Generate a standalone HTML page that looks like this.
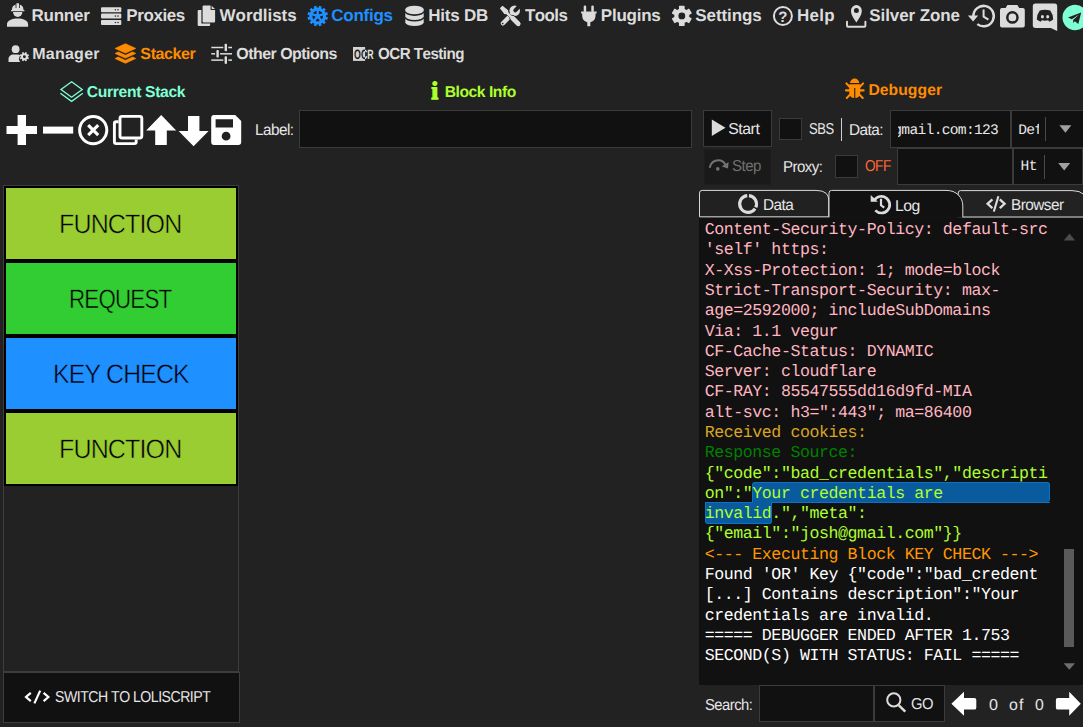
<!DOCTYPE html>
<html lang="en">
<head>
<meta charset="utf-8">
<title>OpenBullet - Stacker</title>
<style>
html,body{margin:0;padding:0;background:#222;}
body{width:1083px;height:727px;position:relative;overflow:hidden;font-family:"Liberation Sans", Arial, sans-serif;color:#dcdcdc;text-rendering:geometricPrecision;}
.abs{position:absolute;box-sizing:border-box;}
.tx{position:absolute;white-space:pre;margin:0;padding:0;font-kerning:none;display:block;}
.box{position:absolute;box-sizing:border-box;background:#111;border:1px solid #3b3b3b;}
.mono{font-family:"Liberation Mono", "DejaVu Sans Mono", monospace;}
.blk{position:absolute;left:6px;width:230px;height:70.5px;}
#stack{position:absolute;left:3px;top:185px;width:236px;height:487px;box-sizing:border-box;border:1px solid #3d3d3d;}
#stackbg{position:absolute;left:4px;top:186px;width:234px;height:300px;background:#000;}
#log{position:absolute;left:699px;top:217.5px;width:384px;height:467px;background:#111;overflow:hidden;}
.ll{position:absolute;left:5.70px;white-space:pre;font-family:"Liberation Mono", "DejaVu Sans Mono", monospace;font-size:16.60px;letter-spacing:-0.4316px;font-kerning:none;}
.sel{position:absolute;box-sizing:border-box;background:#0a5b9e;border:1px solid #0b72c8;}
svg{position:absolute;left:0;top:0;overflow:visible;}
</style>
</head>
<body>
<div id="stackbg"></div>
<div id="stack"></div>
<div class="blk" style="top:188.0px;background:#9acd32"></div>
<div class="blk" style="top:263.0px;background:#32cd32"></div>
<div class="blk" style="top:338.0px;background:#1e90ff"></div>
<div class="blk" style="top:413.0px;background:#9acd32"></div>
<div class="box" id="switch" style="left:3px;top:672px;width:236.5px;height:50.5px;border-color:#3d3d3d"></div>
<div class="box" style="left:299px;top:110px;width:393px;height:37.5px"></div>
<div class="box" style="left:702.5px;top:110px;width:69.4px;height:37px"></div>
<div class="box" style="left:703.5px;top:148.6px;width:67px;height:36px;background:#1a1a1a;border-color:#1d1d1d"></div>
<div class="box" style="left:779px;top:117.7px;width:23.4px;height:22px"></div>
<div class="abs" style="left:840.6px;top:117.5px;width:1.2px;height:23px;background:#cfcfcf"></div>
<div class="box" style="left:890px;top:110px;width:121px;height:38px"></div>
<div class="box" style="left:1011px;top:110px;width:80px;height:38px;border-left-width:1.4px"></div>
<div class="abs" style="left:1045.3px;top:116.5px;width:1px;height:24px;background:#4a4a4a"></div>
<div class="box" style="left:835px;top:155px;width:23px;height:22.7px"></div>
<div class="box" style="left:897px;top:148px;width:116px;height:37px"></div>
<div class="box" style="left:1013px;top:148px;width:70px;height:37px"></div>
<div class="abs" style="left:1044.4px;top:154.5px;width:1px;height:24px;background:#4a4a4a"></div>
<div id="log">
<div class="sel" style="left:53.3px;top:264.3px;width:297.7px;height:20.6px;border-radius:3px 3px 3px 0;border-bottom:none"></div>
<div class="sel" style="left:6.0px;top:284.9px;width:66.9px;height:21.5px;border-radius:0 0 3px 3px;border-top:none"></div>
<div class="abs" style="left:6.0px;top:284.5px;width:48.0px;height:1px;background:#0b72c8"></div>
<div class="abs" style="left:72.9px;top:284.5px;width:278.1px;height:1px;background:#0b72c8"></div>
<div class="ll" style="top:2.50px;line-height:19px;color:#ffb6c1">Content-Security-Policy: default-src</div>
<div class="ll" style="top:22.50px;line-height:19px;color:#ffb6c1">'self' https:</div>
<div class="ll" style="top:43.50px;line-height:19px;color:#ffb6c1">X-Xss-Protection: 1; mode=block</div>
<div class="ll" style="top:63.50px;line-height:19px;color:#ffb6c1">Strict-Transport-Security: max-</div>
<div class="ll" style="top:83.50px;line-height:19px;color:#ffb6c1">age=2592000; includeSubDomains</div>
<div class="ll" style="top:104.50px;line-height:19px;color:#ffb6c1">Via: 1.1 vegur</div>
<div class="ll" style="top:124.50px;line-height:19px;color:#ffb6c1">CF-Cache-Status: DYNAMIC</div>
<div class="ll" style="top:144.50px;line-height:19px;color:#ffb6c1">Server: cloudflare</div>
<div class="ll" style="top:164.50px;line-height:19px;color:#ffb6c1">CF-RAY: 85547555dd16d9fd-MIA</div>
<div class="ll" style="top:185.50px;line-height:19px;color:#ffb6c1">alt-svc: h3=":443"; ma=86400</div>
<div class="ll" style="top:205.50px;line-height:19px;color:#daa520">Received cookies:</div>
<div class="ll" style="top:225.50px;line-height:19px;color:#008000">Response Source:</div>
<div class="ll" style="top:246.50px;line-height:19px;color:#adff2f">{"code":"bad_credentials","descripti</div>
<div class="ll" style="top:266.50px;line-height:19px;color:#adff2f">on":"Your credentials are </div>
<div class="ll" style="top:286.50px;line-height:19px;color:#adff2f">invalid.","meta":</div>
<div class="ll" style="top:306.50px;line-height:19px;color:#adff2f">{"email":"josh@gmail.com"}}</div>
<div class="ll" style="top:327.50px;line-height:19px;color:#ff9800">&lt;--- Executing Block KEY CHECK ---&gt;</div>
<div class="ll" style="top:347.50px;line-height:19px;color:#fff">Found 'OR' Key {"code":"bad_credent</div>
<div class="ll" style="top:367.50px;line-height:19px;color:#fff">[...] Contains description":"Your</div>
<div class="ll" style="top:388.50px;line-height:19px;color:#fff">credentials are invalid.</div>
<div class="ll" style="top:408.50px;line-height:19px;color:#fff">===== DEBUGGER ENDED AFTER 1.753</div>
<div class="ll" style="top:428.50px;line-height:19px;color:#fff">SECOND(S) WITH STATUS: FAIL =====</div>
<div class="abs" style="left:365.2px;top:331.1px;width:10px;height:98px;background:#5a5a5a"></div>
</div>
<div class="box" style="left:759px;top:685px;width:115px;height:37px"></div>
<div class="box" style="left:874px;top:685px;width:71px;height:37px"></div>
<div class="abs" style="left:897.8px;top:112.0px;width:112.0px;height:33.0px;overflow:hidden"><span class="tx mono" style="left:-4.50px;top:11.00px;line-height:16px;font-size:14.60px;letter-spacing:-0.691px;color:#e8e8e8">gmail.com:123</span></div>
<div class="abs" style="left:1014.0px;top:112.0px;width:25.3px;height:33.0px;overflow:hidden"><span class="tx mono" style="left:4.30px;top:11.00px;line-height:16px;font-size:14.60px;letter-spacing:-0.691px;color:#e8e8e8">Default</span></div>
<div class="abs" style="left:1016.0px;top:151.0px;width:21.2px;height:31.0px;overflow:hidden"><span class="tx mono" style="left:4.60px;top:8.00px;line-height:16px;font-size:14.60px;letter-spacing:-0.691px;color:#e8e8e8">Http</span></div>
<svg width="1083" height="727" viewBox="0 0 1083 727">
<g id="ic-runner" fill="#dcdcdc"><path d="M11,11.3 L11,9.9 L11.9,9.9 C11.9,6.6 13.6,5 15.6,4.4 L15.6,8 L16.4,8 L16.4,3.2 L19,3.2 L19,8 L19.8,8 L19.8,4.4 C21.8,5 23.5,6.6 23.5,9.9 L24.4,9.9 L24.4,11.3 Z"/><path d="M13,12.1 L22.4,12.1 A4.7,4.8 0 0 1 13,12.1 Z"/><path d="M7,26.8 L7,24.3 C7,20.4 12.3,18.6 17.6,18.6 C22.9,18.6 28.1,20.4 28.1,24.3 L28.1,26.8 Z"/></g>
<g id="ic-proxies"><rect x="101" y="7.2" width="20.3" height="5" rx="1" fill="#dcdcdc"/><circle cx="115.4" cy="9.7" r="0.8" fill="#333"/><circle cx="118" cy="9.7" r="0.8" fill="#333"/><rect x="101" y="13.6" width="20.3" height="5" rx="1" fill="#dcdcdc"/><circle cx="115.4" cy="16.1" r="0.8" fill="#333"/><circle cx="118" cy="16.1" r="0.8" fill="#333"/><rect x="101" y="20.0" width="20.3" height="5" rx="1" fill="#dcdcdc"/><circle cx="115.4" cy="22.5" r="0.8" fill="#333"/><circle cx="118" cy="22.5" r="0.8" fill="#333"/></g>
<g id="ic-wordlists" fill="#dcdcdc"><path d="M197.7,11 Q197.7,10 198.7,10 L201.4,10 L201.4,23.6 L210.1,23.6 L210.1,25 Q210.1,26 209.1,26 L198.7,26 Q197.7,26 197.7,25 Z"/><path d="M202.6,6.6 Q202.6,5.6 203.6,5.6 L210.6,5.6 L210.6,10 L215.1,10 L215.1,21.5 Q215.1,22.5 214.1,22.5 L203.6,22.5 Q202.6,22.5 202.6,21.5 Z"/><path d="M211.6,5.7 L215,9.1 L211.6,9.1 Z"/></g>
<g id="ic-configs"><path d="M325.66,16.84 L327.92,17.32 L327.21,19.97 L325.01,19.25 L324.17,20.70 L325.89,22.25 L323.95,24.19 L322.40,22.47 L320.95,23.31 L321.67,25.51 L319.02,26.22 L318.54,23.96 L316.86,23.96 L316.38,26.22 L313.73,25.51 L314.45,23.31 L313.00,22.47 L311.45,24.19 L309.51,22.25 L311.23,20.70 L310.39,19.25 L308.19,19.97 L307.48,17.32 L309.74,16.84 L309.74,15.16 L307.48,14.68 L308.19,12.03 L310.39,12.75 L311.23,11.30 L309.51,9.75 L311.45,7.81 L313.00,9.53 L314.45,8.69 L313.73,6.49 L316.38,5.78 L316.86,8.04 L318.54,8.04 L319.02,5.78 L321.67,6.49 L320.95,8.69 L322.40,9.53 L323.95,7.81 L325.89,9.75 L324.17,11.30 L325.01,12.75 L327.21,12.03 L327.92,14.68 L325.66,15.16 Z" fill="#1e90ff"/><circle cx="317.7" cy="16.0" r="6.9" fill="none" stroke="#1e90ff" stroke-width="3"/><circle cx="317.7" cy="16.0" r="5.4" fill="#222"/><line x1="317.70" y1="16.00" x2="317.70" y2="9.80" stroke="#1e90ff" stroke-width="2.3"/><line x1="317.70" y1="16.00" x2="323.60" y2="14.08" stroke="#1e90ff" stroke-width="2.3"/><line x1="317.70" y1="16.00" x2="321.34" y2="21.02" stroke="#1e90ff" stroke-width="2.3"/><line x1="317.70" y1="16.00" x2="314.06" y2="21.02" stroke="#1e90ff" stroke-width="2.3"/><line x1="317.70" y1="16.00" x2="311.80" y2="14.08" stroke="#1e90ff" stroke-width="2.3"/><circle cx="317.7" cy="16.0" r="2.4" fill="#1e90ff"/></g>
<g id="ic-hitsdb"><path d="M405.3,9.2 A9.2,3.5 0 0 1 423.7,9.2 L423.7,22.5 A9.2,3.5 0 0 1 405.3,22.5 Z" fill="#dcdcdc"/><path d="M405.3,11.6 A9.2,3.5 0 0 0 423.7,11.6" fill="none" stroke="#222" stroke-width="1.6"/><path d="M405.3,17.2 A9.2,3.5 0 0 0 423.7,17.2" fill="none" stroke="#222" stroke-width="1.6"/></g>
<g id="ic-tools"><path d="M503,23.3 L511.6,14.4" stroke="#dcdcdc" stroke-width="4.4" stroke-linecap="round" fill="none"/><circle cx="514.7" cy="10.7" r="5.3" fill="#dcdcdc"/><path d="M515.3,10.3 L521.4,4.2" stroke="#222" stroke-width="4" stroke-linecap="round" fill="none"/><circle cx="502.7" cy="23.5" r="0.85" fill="#222"/><path d="M499.9,8.3 L502.5,5.8 L508,10.3 L508.4,12.5 L512.7,16.8 L510.9,18.6 L506.6,14.3 L504.4,13.9 Z" fill="#dcdcdc" stroke="#222" stroke-width="0.9"/><path d="M512.7,18.3 L518.2,23.7" stroke="#222" stroke-width="6.2" stroke-linecap="round" fill="none"/><path d="M512.7,18.3 L518.2,23.7" stroke="#dcdcdc" stroke-width="4.8" stroke-linecap="round" fill="none"/><path d="M499.9,8.3 L502.5,5.8 L508,10.3 L508.4,12.5 L512.7,16.8 L510.9,18.6 L506.6,14.3 L504.4,13.9 Z" fill="#dcdcdc"/></g>
<g id="ic-plugins" fill="#dcdcdc"><rect x="583.7" y="5.6" width="2.5" height="6.4" rx="1.1"/><rect x="591.3" y="5.6" width="2.5" height="6.4" rx="1.1"/><path d="M581.1,11.4 L596.6,11.4 L596.6,13.6 L595.5,13.6 L595.5,15.8 A6.7,6.6 0 0 1 590.3,22.2 L590.3,26.2 L587.3,26.2 L587.3,22.2 A6.7,6.6 0 0 1 582.2,15.8 L582.2,13.6 L581.1,13.6 Z"/></g>
<g id="ic-settings"><path d="M684.03,22.53 L684.05,25.34 L679.55,25.34 L679.57,22.53 L677.17,21.15 L674.75,22.56 L672.50,18.67 L674.94,17.28 L674.94,14.52 L672.50,13.13 L674.75,9.24 L677.17,10.65 L679.57,9.27 L679.55,6.46 L684.05,6.46 L684.03,9.27 L686.43,10.65 L688.85,9.24 L691.10,13.13 L688.66,14.52 L688.66,17.28 L691.10,18.67 L688.85,22.56 L686.43,21.15 Z M678.30,15.90 a3.50,3.50 0 1 0 7.00,0 a3.50,3.50 0 1 0 -7.00,0 Z" fill="#dcdcdc" fill-rule="evenodd" stroke="#dcdcdc" stroke-width="1.2" stroke-linejoin="round"/><circle cx="681.8" cy="15.9" r="3.4" fill="#222"/></g>
<g id="ic-help"><circle cx="782.9" cy="16" r="9" fill="none" stroke="#dcdcdc" stroke-width="2"/><text x="782.95" y="21.9" text-anchor="middle" font-family="Liberation Sans, Arial, sans-serif" font-size="15" font-weight="700" fill="#dcdcdc">?</text></g>
<g id="ic-zone"><path d="M856.4,22.4 C852.6,17.2 851,14.2 851,10.6 A5.4,5.5 0 0 1 861.8,10.6 C861.8,14.2 860.2,17.2 856.4,22.4 Z M853.90,10.40 a2.50,2.50 0 1 0 5.00,0 a2.50,2.50 0 1 0 -5.00,0 Z" fill="#dcdcdc" fill-rule="evenodd"/><path d="M847,21.6 L847,25.8 Q847,26.8 848,26.8 L864.4,26.8 Q865.4,26.8 865.4,25.8 L865.4,21.6" fill="none" stroke="#dcdcdc" stroke-width="1.9" stroke-linecap="round"/></g>
<g id="ic-history"><path d="M973.40,16.10 A10.20,10.20 0 1 1 977.32,24.14" fill="none" stroke="#dcdcdc" stroke-width="2.5"/><path d="M967.9,15.6 L978.2,15.6 L973.1,21.4 Z" fill="#dcdcdc"/><path d="M983.6,9.6 L983.6,16.6 L988.4,19.6" fill="none" stroke="#dcdcdc" stroke-width="2"/></g>
<g id="ic-camera"><path d="M1002,7.9 L1005.6,7.9 L1007.4,5.1 L1017.4,5.1 L1019.2,7.9 L1022.8,7.9 Q1024.8,7.9 1024.8,9.9 L1024.8,25.5 Q1024.8,27.5 1022.8,27.5 L1002,27.5 Q1000,27.5 1000,25.5 L1000,9.9 Q1000,7.9 1002,7.9 Z" fill="#dcdcdc"/><circle cx="1012.4" cy="17.4" r="5.1" fill="none" stroke="#222" stroke-width="2.5"/></g>
<g id="ic-discord"><path d="M1035.4,3.6 L1054.6,3.6 Q1057.2,3.6 1057.2,6.2 L1057.2,31 L1050.8,27.9 L1035.4,27.9 Q1032.8,27.9 1032.8,25.3 L1032.8,6.2 Q1032.8,3.6 1035.4,3.6 Z" fill="#dcdcdc"/><path d="M1039.8,10.6 Q1045,8.9 1050.2,10.6 Q1053.4,14.8 1053.2,19.6 Q1051.4,21.2 1049.2,21.7 L1048.2,20.2 Q1045,21.1 1041.8,20.2 L1040.8,21.7 Q1038.6,21.2 1036.8,19.6 Q1036.6,14.8 1039.8,10.6 Z" fill="#222"/><ellipse cx="1042.4" cy="16.7" rx="1.5" ry="1.7" fill="#dcdcdc"/><ellipse cx="1047.7" cy="16.7" rx="1.5" ry="1.7" fill="#dcdcdc"/></g>
<g id="ic-telegram"><circle cx="1075.2" cy="17.5" r="12.7" fill="#7fffd4"/><path d="M1067.9,17.6 L1081.2,12.6 L1078.3,23.9 L1074.8,21.3 L1073.2,22.9 L1073.1,20.1 L1079.2,14.5 L1071.8,19.2 Z" fill="#222"/></g>
<g id="ic-manager"><circle cx="15.6" cy="49.2" r="3.9" fill="#dcdcdc"/><path d="M8.5,62 L8.5,59.4 C8.5,56.4 10.8,54.6 13.6,54.6 L17.6,54.6 C18.6,54.6 19.6,54.9 20.4,55.4 C18.6,57.4 18.6,60 20.2,62 Z" fill="#dcdcdc"/><path d="M27.96,57.24 L29.03,57.51 L28.25,59.40 L27.30,58.84 L26.54,59.60 L27.10,60.55 L25.21,61.33 L24.94,60.26 L23.86,60.26 L23.59,61.33 L21.70,60.55 L22.26,59.60 L21.50,58.84 L20.55,59.40 L19.77,57.51 L20.84,57.24 L20.84,56.16 L19.77,55.89 L20.55,54.00 L21.50,54.56 L22.26,53.80 L21.70,52.85 L23.59,52.07 L23.86,53.14 L24.94,53.14 L25.21,52.07 L27.10,52.85 L26.54,53.80 L27.30,54.56 L28.25,54.00 L29.03,55.89 L27.96,56.16 Z M22.95,56.70 a1.45,1.45 0 1 0 2.90,0 a1.45,1.45 0 1 0 -2.90,0 Z" fill="#dcdcdc" fill-rule="evenodd"/></g>
<g id="ic-stacker" fill="#ff8c00"><path d="M125.4,43.8 L135.6,48.4 L125.4,53 L115.2,48.4 Z" stroke="#ff8c00" stroke-width="0.8" stroke-linejoin="round"/><path d="M115.2,53.4 L118.2,52 L125.4,55.3 L132.6,52 L135.6,53.4 L125.4,58.1 Z" stroke="#ff8c00" stroke-width="0.8" stroke-linejoin="round"/><path d="M115.2,58.5 L118.2,57.1 L125.4,60.4 L132.6,57.1 L135.6,58.5 L125.4,63.2 Z" stroke="#ff8c00" stroke-width="0.8" stroke-linejoin="round"/></g>
<g id="ic-options" fill="#dcdcdc"><rect x="211.3" y="46.75" width="20.7" height="1.5"/><rect x="223.30" y="43.60" width="5" height="7.8" fill="#222"/><rect x="224.60" y="43.70" width="2.4" height="7.6" rx="0.8"/><rect x="211.3" y="53.05" width="20.7" height="1.5"/><rect x="215.10" y="49.90" width="5" height="7.8" fill="#222"/><rect x="216.40" y="50.00" width="2.4" height="7.6" rx="0.8"/><rect x="211.3" y="59.35" width="20.7" height="1.5"/><rect x="223.30" y="56.20" width="5" height="7.8" fill="#222"/><rect x="224.60" y="56.30" width="2.4" height="7.6" rx="0.8"/></g>
<g id="ic-ocr"><clipPath id="ocrclip"><rect x="365.1" y="40" width="20" height="30"/></clipPath><rect x="353" y="47" width="12.1" height="13.9" fill="#d4d4d4"/><text x="354.1" y="58.6" font-family="Liberation Sans, Arial, sans-serif" font-weight="700" font-size="13.6" textLength="19.6" lengthAdjust="spacingAndGlyphs" fill="#1c1c1c">OCR</text><text x="354.1" y="58.6" font-family="Liberation Sans, Arial, sans-serif" font-weight="700" font-size="13.6" textLength="19.6" lengthAdjust="spacingAndGlyphs" fill="#e0e0e0" clip-path="url(#ocrclip)">OCR</text></g>
<g id="ic-curstack" fill="none" stroke="#7fffd4" stroke-width="1.35" stroke-linejoin="miter"><path d="M71.6,81.8 L82.2,89.5 L71.6,97.2 L61,89.5 Z"/><path d="M60.4,93.3 L71.6,101.3 L82.8,93.3"/></g>
<g id="ic-info" fill="#adff2f"><text x="434.7" y="99" text-anchor="middle" font-family="Liberation Serif, Times New Roman, serif" font-size="25" font-weight="700" fill="#adff2f" stroke="#adff2f" stroke-width="1.3" stroke-linejoin="round">i</text></g>
<g id="ic-bug"><path d="M850,83.1 A4.65,4.5 0 0 1 859.3,83.1 Z" fill="#ff8c00"/><path d="M849.2,84.3 L860.3,84.3 L860.3,92 Q860.3,98 854.75,98 Q849.2,98 849.2,92 Z" fill="#ff8c00"/><g fill="none" stroke="#ff8c00" stroke-width="2.1" stroke-linecap="round"><path d="M849.8,87 L846.4,83.4"/><path d="M859.7,87 L863.1,83.4"/><path d="M849.4,90.4 L846,90.4"/><path d="M860.1,90.4 L863.6,90.4"/><path d="M850.2,94.4 L846.8,98"/><path d="M859.3,94.4 L862.7,98"/></g><rect x="854.2" y="88" width="1.1" height="10.4" fill="#222"/></g>
<g id="ic-toolbar" fill="#ffffff"><rect x="6.5" y="126" width="30.5" height="8"/><rect x="17.6" y="115" width="8.4" height="30"/><rect x="43" y="126.6" width="30.2" height="7"/><circle cx="93.2" cy="130.1" r="13.6" fill="none" stroke="#ffffff" stroke-width="3"/><path d="M88.2,125.1 L98.2,135.1 M98.2,125.1 L88.2,135.1" stroke="#ffffff" stroke-width="3.1" fill="none"/><path d="M118.6,121.8 L116.2,121.8 Q114.4,121.8 114.4,123.6 L114.4,141.8 Q114.4,143.6 116.2,143.6 L134.4,143.6 Q136.2,143.6 136.2,141.8 L136.2,139.4" fill="none" stroke="#ffffff" stroke-width="2.9"/><rect x="120" y="116.4" width="21.8" height="21.6" rx="2" fill="none" stroke="#ffffff" stroke-width="2.9"/><path d="M161.2,115 L176.2,130.4 L166.8,130.4 L166.8,145 L155.2,145 L155.2,130.4 L146.2,130.4 Z"/><path d="M193.6,146.2 L178.6,131 L188,131 L188,116 L199.4,116 L199.4,131 L208.6,131 Z"/><path d="M214,115 L235.2,115 L241.2,121 L241.2,142 Q241.2,145 238.2,145 L214,145 Q211.2,145 211.2,142 L211.2,118 Q211.2,115 214,115 Z M215.6,119.2 L215.6,127.4 L233,127.4 L233,119.2 Z M221.70,136.20 a4.40,4.40 0 1 0 8.80,0 a4.40,4.40 0 1 0 -8.80,0 Z" fill-rule="evenodd"/></g>
<path id="ic-play" d="M711.8,119.5 L725.5,127.8 L711.8,136.1 Z" fill="#dcdcdc"/><g id="ic-step"><path d="M709.7,167.7 Q711.4,160.3 718.4,160.3 Q723.3,160.3 725.4,164.8" fill="none" stroke="#747474" stroke-width="2"/><path d="M728.6,161.9 L728,168.6 L721.7,166.6 Z" fill="#747474"/><circle cx="717.8" cy="168.9" r="1.8" fill="#747474"/></g>
<path d="M1059.4,125.2 L1071.4,125.2 L1065.4,132.8 Z" fill="#a0a0a0"/><path d="M1058.2,163 L1070.2,163 L1064.2,170.4 Z" fill="#a0a0a0"/><path d="M958.2,217 L958.2,193 Q958.2,190.6 960.6,190.6 L1072,190.6 Q1080,190.6 1084,194.5 L1084,217 Z" fill="#222" stroke="#d8d8d8" stroke-width="1"/><path d="M699.5,216.8 L699.5,193 Q699.5,190.4 702.1,190.4 L816,190.4 Q823,190.4 826,193.2 Q828.7,195.6 828.7,200 L828.7,216.8 Z" fill="#212121" stroke="#d8d8d8" stroke-width="1"/><path d="M829,217.8 L829,193 Q829,190.4 831.6,190.4 L946,190.4 Q954,190.4 958.4,195 Q962.8,199.4 962.8,206 L962.8,217.8 Z" fill="#111"/><path d="M829,217.3 L829,193 Q829,190.4 831.6,190.4 L946,190.4 Q954,190.4 958.4,195 Q962.8,199.4 962.8,206 L962.8,217.3" fill="none" stroke="#d8d8d8" stroke-width="1"/><g id="ic-donut" fill="none" stroke="#dcdcdc" stroke-width="3.2"><path d="M748.98,195.55 A8.40,8.40 0 0 1 755.77,207.32"/><path d="M755.06,208.60 A8.40,8.40 0 1 1 747.22,195.55"/></g>
<g id="ic-loghist"><path d="M874.36,200.30 A8.30,8.30 0 1 1 875.33,210.36" fill="none" stroke="#dcdcdc" stroke-width="2.7"/><path d="M870.7,195 L870.7,201.8 L877.9,201.8 Z" fill="#dcdcdc"/><path d="M881,198.8 L881,205.3 L884.2,207.7" fill="none" stroke="#dcdcdc" stroke-width="2.2"/></g>
<g id="ic-code1" fill="none" stroke="#dcdcdc" stroke-width="2.3"><path d="M992.4,199.4 L987.6,203.8 L992.4,208.2"/><path d="M999.8,199.4 L1004.6,203.8 L999.8,208.2"/><path d="M998.4,196.2 L993.8,211.6" stroke-width="2.1"/></g>
<path d="M1063.8,240.4 L1075.2,240.4 L1069.5,233.6 Z" fill="#4c4c4c"/><path d="M1063.6,663.2 L1075,663.2 L1069.3,669.8 Z" fill="#6e6e6e"/><g id="ic-search" fill="none" stroke="#dcdcdc"><circle cx="893.8" cy="699.9" r="6.6" stroke-width="2"/><path d="M898.6,705.2 L905.3,711.7" stroke-width="2.5"/></g>
<path d="M951.4,703.8 L964,691.7 L964,698.1 L974.4,698.1 Q976.3,698.1 976.3,700 L976.3,707.7 Q976.3,709.6 974.4,709.6 L964,709.6 L964,715.8 Z" fill="#ffffff"/><path d="M1080.8,703.8 L1069.2,691.7 L1069.2,698.1 L1057.8,698.1 Q1055.9,698.1 1055.9,700 L1055.9,707.7 Q1055.9,709.6 1057.8,709.6 L1069.2,709.6 L1069.2,715.8 Z" fill="#ffffff"/><g id="ic-code2" fill="none" stroke="#ffffff" stroke-width="2.2"><path d="M30.8,692.8 L26,697 L30.8,701.2"/><path d="M43.6,692.8 L48.4,697 L43.6,701.2"/><path d="M40.2,690.6 L34.4,703.4"/></g>
</svg>
<nav id="main-menu">
<span class="tx" id="t0" style="left:31.52px;top:6px;line-height:19px;font-size:17.00px;font-weight:700;color:#dcdcdc;letter-spacing:-0.236px">Runner</span>
<span class="tx" id="t1" style="left:126.32px;top:6px;line-height:19px;font-size:17.00px;font-weight:700;color:#dcdcdc;letter-spacing:-0.403px">Proxies</span>
<span class="tx" id="t2" style="left:219.62px;top:6px;line-height:19px;font-size:17.00px;font-weight:700;color:#dcdcdc;letter-spacing:-0.054px">Wordlists</span>
<span class="tx" id="t3" style="left:331.32px;top:6px;line-height:19px;font-size:17.00px;font-weight:700;color:#1e90ff;letter-spacing:-0.260px">Configs</span>
<span class="tx" id="t4" style="left:428.32px;top:6px;line-height:19px;font-size:17.00px;font-weight:700;color:#dcdcdc;letter-spacing:-0.231px">Hits DB</span>
<span class="tx" id="t5" style="left:525.02px;top:6px;line-height:19px;font-size:17.00px;font-weight:700;color:#dcdcdc;letter-spacing:-0.595px;transform:scaleX(0.9967);transform-origin:0 0">Tools</span>
<span class="tx" id="t6" style="left:600.82px;top:6px;line-height:19px;font-size:17.00px;font-weight:700;color:#dcdcdc;letter-spacing:-0.231px">Plugins</span>
<span class="tx" id="t7" style="left:695.32px;top:6px;line-height:19px;font-size:17.00px;font-weight:700;color:#dcdcdc;letter-spacing:-0.078px">Settings</span>
<span class="tx" id="t8" style="left:797.12px;top:6px;line-height:19px;font-size:17.00px;font-weight:700;color:#dcdcdc;letter-spacing:0.192px">Help</span>
<span class="tx" id="t9" style="left:869.32px;top:6px;line-height:19px;font-size:17.00px;font-weight:700;color:#dcdcdc;letter-spacing:-0.092px">Silver Zone</span>
</nav>
<nav id="config-menu">
<span class="tx" id="t10" style="left:32.16px;top:46px;line-height:17px;font-size:16.00px;font-weight:700;color:#dcdcdc;letter-spacing:0.261px">Manager</span>
<span class="tx" id="t11" style="left:140.36px;top:46px;line-height:17px;font-size:16.00px;font-weight:700;color:#ff8c00;letter-spacing:-0.395px">Stacker</span>
<span class="tx" id="t12" style="left:236.36px;top:46px;line-height:17px;font-size:16.00px;font-weight:700;color:#dcdcdc;letter-spacing:-0.550px">Other Options</span>
<span class="tx" id="t13" style="left:378.39px;top:46px;line-height:17px;font-size:16.00px;font-weight:700;color:#dcdcdc;letter-spacing:-0.560px;transform:scaleX(0.9471);transform-origin:0 0">OCR Testing</span>
</nav>
<header id="section-titles">
<span class="tx" id="t14" style="left:86.77px;top:84px;line-height:17px;font-size:15.70px;font-weight:700;color:#7fffd4;letter-spacing:-0.344px">Current Stack</span>
<span class="tx" id="t15" style="left:444.67px;top:84px;line-height:17px;font-size:15.70px;font-weight:700;color:#adff2f;letter-spacing:-0.465px">Block Info</span>
<span class="tx" id="t16" style="left:868.47px;top:82px;line-height:17px;font-size:15.70px;font-weight:700;color:#ff8c00;letter-spacing:0.046px">Debugger</span>
</header>
<section id="debugger-controls">
<span class="tx" id="t17" style="left:254.61px;top:122px;line-height:17px;font-size:15.80px;font-weight:400;color:#e6e6e6;letter-spacing:-0.553px;transform:scaleX(0.9683);transform-origin:0 0">Label:</span>
<span class="tx" id="t18" style="left:728.19px;top:121px;line-height:17px;font-size:15.80px;font-weight:400;color:#e6e6e6;letter-spacing:-0.442px">Start</span>
<span class="tx" id="t19" style="left:808.91px;top:121px;line-height:17px;font-size:15.80px;font-weight:400;color:#e6e6e6;letter-spacing:-0.553px;transform:scaleX(0.8231);transform-origin:0 0">SBS</span>
<span class="tx" id="t20" style="left:848.81px;top:122px;line-height:17px;font-size:15.80px;font-weight:400;color:#e6e6e6;letter-spacing:-0.553px;transform:scaleX(0.9733);transform-origin:0 0">Data:</span>
<span class="tx" id="t21" style="left:732.42px;top:158px;line-height:17px;font-size:15.80px;font-weight:400;color:#707070;letter-spacing:-0.553px;transform:scaleX(0.9535);transform-origin:0 0">Step</span>
<span class="tx" id="t22" style="left:783.22px;top:159px;line-height:17px;font-size:15.80px;font-weight:400;color:#e6e6e6;letter-spacing:-0.553px;transform:scaleX(0.9498);transform-origin:0 0">Proxy:</span>
<span class="tx" id="t23" style="left:865.29px;top:158px;line-height:17px;font-size:15.80px;font-weight:400;color:#ff6838;letter-spacing:-0.553px;transform:scaleX(0.8628);transform-origin:0 0">OFF</span>
<span class="tx" id="t24" style="left:763.21px;top:197px;line-height:17px;font-size:15.80px;font-weight:400;color:#e6e6e6;letter-spacing:-0.553px;transform:scaleX(0.9713);transform-origin:0 0">Data</span>
<span class="tx" id="t25" style="left:895.49px;top:198px;line-height:17px;font-size:15.80px;font-weight:400;color:#e6e6e6;letter-spacing:-0.553px;transform:scaleX(0.9981);transform-origin:0 0">Log</span>
<span class="tx" id="t26" style="left:1011.31px;top:197px;line-height:17px;font-size:15.80px;font-weight:400;color:#e6e6e6;letter-spacing:-0.553px;transform:scaleX(0.9723);transform-origin:0 0">Browser</span>
<span class="tx" id="t27" style="left:704.83px;top:697px;line-height:17px;font-size:15.80px;font-weight:400;color:#e6e6e6;letter-spacing:-0.553px;transform:scaleX(0.9369);transform-origin:0 0">Search:</span>
<span class="tx" id="t28" style="left:910.63px;top:696px;line-height:17px;font-size:15.80px;font-weight:400;color:#e6e6e6;letter-spacing:-0.553px;transform:scaleX(0.9368);transform-origin:0 0">GO</span>
<span class="tx" id="t29" style="left:988.57px;top:697px;line-height:17px;font-size:15.80px;font-weight:400;color:#e6e6e6;letter-spacing:0.000px;transform:scaleX(1.0238);transform-origin:0 0">0</span>
<span class="tx" id="t30" style="left:1009.28px;top:697px;line-height:17px;font-size:15.80px;font-weight:400;color:#e6e6e6;letter-spacing:1.106px;transform:scaleX(1.0079);transform-origin:0 0">of</span>
<span class="tx" id="t31" style="left:1034.99px;top:697px;line-height:17px;font-size:15.80px;font-weight:400;color:#e6e6e6;letter-spacing:0.000px;transform:scaleX(1.0010);transform-origin:0 0">0</span>
</section>
<footer id="mode-switch">
<span class="tx" id="t32" style="left:55.37px;top:689px;line-height:17px;font-size:15.80px;font-weight:400;color:#e6e6e6;letter-spacing:-0.553px;transform:scaleX(0.8919);transform-origin:0 0">SWITCH TO LOLISCRIPT</span>
</footer>
<section id="stack-blocks">
<span class="tx" id="t33" style="left:59.47px;top:209px;line-height:30px;font-size:26.60px;font-weight:400;color:#000;letter-spacing:-0.931px;transform:scaleX(0.9418);transform-origin:0 0;-webkit-text-stroke:0.55px #9acd32">FUNCTION</span>
<span class="tx" id="t34" style="left:69.40px;top:284px;line-height:30px;font-size:26.60px;font-weight:400;color:#000;letter-spacing:-0.931px;transform:scaleX(0.8389);transform-origin:0 0;-webkit-text-stroke:0.55px #32cd32">REQUEST</span>
<span class="tx" id="t35" style="left:52.58px;top:359px;line-height:30px;font-size:26.60px;font-weight:400;color:#000;letter-spacing:-0.931px;transform:scaleX(0.9337);transform-origin:0 0;-webkit-text-stroke:0.55px #1e90ff">KEY CHECK</span>
<span class="tx" id="t36" style="left:59.47px;top:434px;line-height:30px;font-size:26.60px;font-weight:400;color:#000;letter-spacing:-0.931px;transform:scaleX(0.9418);transform-origin:0 0;-webkit-text-stroke:0.55px #9acd32">FUNCTION</span>
</section>
</body>
</html>
